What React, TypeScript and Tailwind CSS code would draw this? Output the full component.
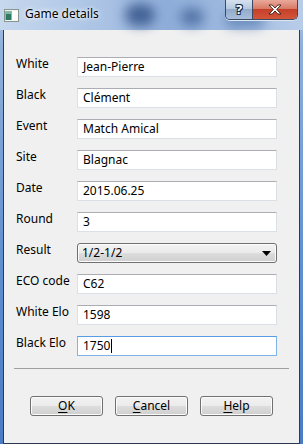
import React from "react";

const fields: { label: string; value: string; kind?: "combo" | "focus" }[] = [
  { label: "White", value: "Jean-Pierre" },
  { label: "Black", value: "Clément" },
  { label: "Event", value: "Match Amical" },
  { label: "Site", value: "Blagnac" },
  { label: "Date", value: "2015.06.25" },
  { label: "Round", value: "3" },
  { label: "Result", value: "1/2-1/2", kind: "combo" },
  { label: "ECO code", value: "C62" },
  { label: "White Elo", value: "1598" },
  { label: "Black Elo", value: "1750", kind: "focus" },
];

function AppIcon() {
  return (
    <svg width="15" height="13" viewBox="0 0 15 13" aria-hidden>
      <rect x="0.5" y="0.5" width="14" height="12" fill="#f4f6f4" stroke="#8a9590" />
      <rect x="1.5" y="2" width="6" height="9" fill="#2f7a64" />
      <rect x="1.5" y="2" width="6" height="3" fill="#7fb9a4" />
      <rect x="8.5" y="2" width="5" height="9" fill="#ffffff" />
    </svg>
  );
}

function Field({ label, value, kind }: (typeof fields)[number]) {
  return (
    <div className="flex items-start">
      <span className="-mt-[1px] w-[61px] leading-[16px]">{label}</span>
      {kind === "combo" ? (
        <div className="flex h-[20px] w-[200px] items-center rounded-[3px] border border-[#707070] bg-[linear-gradient(180deg,#f2f2f2_0%,#ebebeb_50%,#dddddd_51%,#cfcfcf_100%)] pl-[4px] pr-[4px] shadow-[inset_0_0_0_1px_#fcfcfc]">
          <span className="flex-1">{value}</span>
          <svg width="9" height="5" viewBox="0 0 9 5" className="mr-[1px]" aria-hidden>
            <path d="M0 0h9L4.5 5z" fill="#000" />
          </svg>
        </div>
      ) : (
        <div
          className={
            kind === "focus"
              ? "flex h-[20px] w-[200px] items-center border border-[#7eb4ea] border-t-[#569de5] bg-white pl-[5px]"
              : "flex h-[20px] w-[200px] items-center border border-[#dbdfe6] border-t-[#abadb3] bg-white pl-[5px]"
          }
        >
          <span>{value}</span>
          {kind === "focus" && <span className="ml-[1px] h-[14px] w-[1px] bg-black" />}
        </div>
      )}
    </div>
  );
}

function Button({ mn, rest }: { mn: string; rest: string }) {
  return (
    <div className="flex h-[20px] w-[73px] items-center justify-center rounded-[3px] border border-[#707070] bg-[linear-gradient(180deg,#f2f2f2_0%,#ebebeb_50%,#dddddd_51%,#cfcfcf_100%)] shadow-[inset_0_0_0_1px_#fcfcfc]">
      <span>
        <span className="underline underline-offset-[2px]">{mn}</span>
        {rest}
      </span>
    </div>
  );
}

export default function App() {
  return (
    <div
      className="relative flex h-[444px] w-[303px] flex-col overflow-hidden bg-[linear-gradient(180deg,#b3c9e6_0%,#8fb0dc_10%,#5f8fd0_60%,#4a7cc4_100%)] text-[12px] text-black"
      style={{ fontFamily: '"Noto Sans", "Open Sans", sans-serif' }}
    >
      {/* glass blobs behind the title */}
      <div className="pointer-events-none absolute left-0 top-0 h-[30px] w-[303px] bg-[linear-gradient(90deg,#c6d8ee_0%,#a9c2e4_35%,#8fadd9_55%,#9db9df_75%,#b9cde9_100%)]" />
      <div className="pointer-events-none absolute left-[125px] top-[4px] h-[22px] w-[30px] rounded-full bg-[#1f3f78] opacity-70 blur-[6px]" />
      <div className="pointer-events-none absolute left-[180px] top-[8px] h-[18px] w-[24px] rounded-full bg-[#2a4d86] opacity-60 blur-[6px]" />
      <div className="pointer-events-none absolute left-[225px] top-[12px] h-[16px] w-[40px] rounded-full bg-[#345c98] opacity-50 blur-[6px]" />

      {/* title bar */}
      <div className="relative flex h-[29px] shrink-0 items-start">
        <div className="ml-[4px] mt-[9px]">
          <AppIcon />
        </div>
        <span className="ml-[6px] mt-[6px] text-[12px] leading-[16px] [text-shadow:0_0_6px_#ffffff,0_0_3px_#ffffff]">
          Game details
        </span>
        <div className="ml-auto mr-[5px] flex h-[20px] overflow-hidden rounded-b-[5px] border border-t-0 border-[#3b4a63] shadow-[0_1px_0_#dbe6f3]">
          <div className="flex w-[27px] items-center justify-center border-r border-[#3b4a63] bg-[linear-gradient(180deg,#d6e1ee_0%,#b7c9df_45%,#93abcb_50%,#a8bedb_100%)] text-[13px] font-bold leading-none text-white [text-shadow:0_0_1px_#1d2a3e,1px_1px_0_#1d2a3e,-1px_-1px_0_#1d2a3e,1px_-1px_0_#1d2a3e,-1px_1px_0_#1d2a3e]">
            ?
          </div>
          <div className="flex w-[44px] items-center justify-center bg-[linear-gradient(180deg,#e9a99b_0%,#d87b66_45%,#c4402a_50%,#d3553a_100%)]">
            <svg width="14" height="11" viewBox="0 0 14 11" aria-hidden>
              <path
                d="M1 1h3.2L7 4l2.8-3H13L8.7 5.5 13 10H9.8L7 7 4.2 10H1l4.3-4.5z"
                fill="#ffffff"
                stroke="#3a1a14"
                strokeWidth="0.9"
                strokeLinejoin="round"
              />
            </svg>
          </div>
        </div>
      </div>

      {/* client area */}
      <div className="mx-[3px] flex flex-1 flex-col border border-[#2c3b52] bg-[#f0f0f0]">
        <div className="flex flex-col gap-[11px] pl-[12px] pt-[27px]">
          {fields.map((f) => (
            <Field key={f.label} {...f} />
          ))}
        </div>
        <div className="ml-[10px] mr-[10px] mt-[12px] h-[1px] bg-[#a0a0a0]" />
        <div className="mt-[27px] flex gap-[12px] pl-[26px]">
          <Button mn="O" rest="K" />
          <Button mn="C" rest="ancel" />
          <Button mn="H" rest="elp" />
        </div>
      </div>
    </div>
  );
}
